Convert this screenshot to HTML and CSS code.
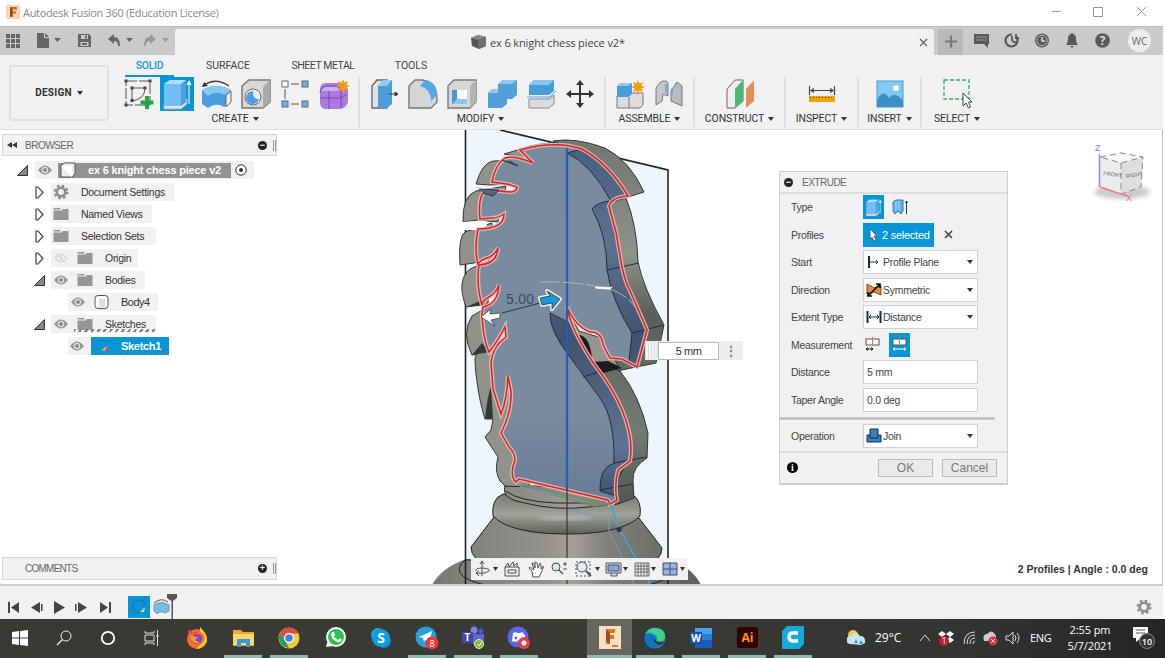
FILE: index.html
```html
<!DOCTYPE html>
<html lang="en">
<head>
<meta charset="utf-8">
<title>Autodesk Fusion 360</title>
<link rel="stylesheet" href="styles.css">
</head>
<body>
<svg class="defs" width="0" height="0">
  <symbol id="eye" viewBox="0 0 14 10"><path d="M0 5Q7-4 14 5Q7 14 0 5Z" fill="#999"/><circle cx="7" cy="5" r="3.1" fill="#eee"/><circle cx="7" cy="5" r="2" fill="#888"/></symbol>
  <symbol id="eyeoff" viewBox="0 0 14 10"><path d="M1 5Q7-2 13 5Q7 12 1 5ZM2 0L12 10" fill="none" stroke="#d8d8d8" stroke-width="1.3"/><circle cx="7" cy="5" r="1.8" fill="#d8d8d8"/></symbol>
  <symbol id="folder" viewBox="0 0 15 12"><path d="M0 0H7V1.5H0ZM0 2.5H8L9.5 1H15V12H0Z" fill="#969696"/></symbol>
  <symbol id="open" viewBox="0 0 11 11"><path d="M10.500 .5V10.500H.5Z" fill="#888" stroke="#333"/></symbol>
  <symbol id="closed" viewBox="0 0 9 13"><path d="M1 1H3L8 6.5L3 12H1Z" fill="#fff" stroke="#444" stroke-width="1.2"/></symbol>
  <symbol id="gear" viewBox="0 0 16 16"><circle cx="8" cy="8" r="6.2" fill="none" stroke="#8d8d8d" stroke-width="2.4" stroke-dasharray="2.5 2.37"/><circle cx="8" cy="8" r="4.200" fill="none" stroke="#8d8d8d" stroke-width="2.6"/></symbol>
  <symbol id="extrude" viewBox="0 0 34 34"><path d="M4 27V32H21L27 27V22Z" fill="#e4e4e4" stroke="#aaa"/><path d="M4 7L10 3H26V25L21 29H4Z" fill="#73bdf5"/><path d="M4 7L10 3H26L21 7Z" fill="#b3deff"/><path d="M21 7L26 3V25L21 29Z" fill="#4ba0e0"/><path d="M29 27V6M27 7.500L29 4L31 7.500Z" stroke="#fff" fill="#fff"/></symbol>
  <symbol id="spark" viewBox="0 0 14 14"><path d="M7 0L8.300 3.600L12 2L10.400 5.700L14 7L10.400 8.300L12 12L8.300 10.400L7 14L5.700 10.400L2 12L3.600 8.300L0 7L3.600 5.700L2 2L5.700 3.600Z" fill="#f39b0c"/></symbol>
</svg>

<header class="titlebar">
  <svg width="14" height="14" viewBox="0 0 14 14"><rect width="14" height="14" rx="1" fill="#f8d3b2"/><path d="M4 12V2H11V4.500H6.500V6.500H10V8.500H6.500V12Z" fill="#c96c1d"/><path d="M4 2L6.500 4.500V12L4 11Z" fill="#914515"/></svg>
  <span class="app-name">Autodesk Fusion 360 (Education License)</span>
  <svg class="win-buttons" width="96" height="12" viewBox="0 0 96 12" fill="none" stroke="#999"><path d="M1 5.500H10M42.500 1.500H51.500V10.500H42.500ZM86 1L95 10M95 1L86 10"/></svg>
</header>

<div class="tabbar">
  <svg class="quick" width="175" height="29" viewBox="0 26 175 29" fill="#666">
    <path d="M6 34h4v4h-4zM11 34h4v4h-4zM16 34h4v4h-4zM6 39h4v4h-4zM11 39h4v4h-4zM16 39h4v4h-4zM6 44h4v4h-4zM11 44h4v4h-4zM16 44h4v4h-4z"/>
    <path d="M37 33H44V38H49V48H37ZM45 33L49 37H45ZM54 38H61L57.500 42Z"/>
    <path d="M78 34H89L91 36V47H78Z"/><path d="M81 35H88V39H81ZM80.500 42H88.500V46H80.500Z" fill="#ccc"/><path d="M85 35.500H87V38.500H85ZM82 43H87V45H82Z"/>
    <path d="M108 39L114 34V37Q120 37 120 46H118Q118 41 114 41V44ZM126 38H133L129.500 42Z"/>
    <g fill="#999"><path d="M156 39L150 34V37Q144 37 144 46H146Q146 41 150 41V44ZM162 38H169L165.500 42Z"/></g>
  </svg>
  <div class="doc-tab">
    <svg width="16" height="14" viewBox="0 0 16 14"><path d="M0 3L7 0L15 2V11L8 14L1 11Z" fill="#555"/><path d="M0 3L7 0L15 2L7 5Z" fill="#888"/><path d="M7 5L15 2V11L8 14Z" fill="#707070"/></svg>
    <span>ex 6 knight chess piece v2*</span>
    <svg class="tab-close" width="9" height="9" viewBox="0 0 9 9"><path d="M1 1L8 8M8 1L1 8" stroke="#666" stroke-width="1.3"/></svg>
  </div>
  <svg class="status" width="231" height="29" viewBox="934 26 231 29" fill="#5a5a5a">
    <path d="M938 55V31Q938 29 940 29H961Q963 29 963 31V55Z" fill="#b9b9b9"/><path d="M945 41.500H957M951 35.500V47.500" stroke="#777" stroke-width="2.200"/>
    <path d="M974 34H989V44H988V48L984 44H974Z"/><path d="M976 37H987M976 40H987" stroke="#999"/>
    <circle cx="1011.500" cy="40.500" r="6" fill="none" stroke="#555" stroke-width="2.200" stroke-dasharray="28 5 5 0"/><path d="M1012 36V40Q1013 43 1016 42M1016 34V38H1019" stroke="#555" stroke-width="1.800" fill="none"/>
    <circle cx="1042" cy="40.500" r="7"/><circle cx="1042" cy="40.500" r="5.200" fill="none" stroke="#bbb"/><path d="M1042 37V41H1045" stroke="#ddd" stroke-width="1.500" fill="none"/>
    <path d="M1066 45Q1068 43 1068 38Q1068 35 1072 33Q1076 35 1076 38Q1076 43 1078 45ZM1070 46H1074L1072 48Z"/>
    <circle cx="1102.500" cy="40.500" r="7.300"/><text x="1102.500" y="45" class="help">?</text>
    <circle cx="1139.500" cy="40.500" r="11.500" fill="#ededed"/><text x="1139.500" y="44.500" class="user">WC</text>
  </svg>
</div>

<section class="ribbon">
  <div class="design">DESIGN <i class="caret"></i></div>
  <div class="ribbon-main">
    <nav class="tabs"><b class="on">SOLID</b><span class="t2">SURFACE</span><span class="t3">SHEET METAL</span><span class="t4">TOOLS</span></nav>
    <div class="groups">
      <div class="group g-create"><div class="icons">
        <svg width="34" height="34" viewBox="0 0 34 34"><path d="M5 4H29V28H5Z" fill="none" stroke="#555" stroke-width="1" stroke-dasharray="11 2"/><path d="M11 11H24Q24 22 11 24Z" fill="none" stroke="#555"/><path d="M3.500 2.500h3v3h-3zM27.500 2.500h3v3h-3zM3.500 26.500h3v3h-3zM9.500 9.500h3v3h-3zM22.500 9.500h3v3h-3zM9.500 22h3v3h-3z" fill="#444"/><path d="M26 19V32M19.500 25.500H32.500" stroke="#25a749" stroke-width="4"/></svg>
        <span class="selected"><svg width="34" height="34"><use href="#extrude"/></svg></span>
        <svg width="34" height="34" viewBox="0 0 34 34"><path d="M3 13Q17 5 32 13V25L25 30Q17 25 9 31L3 27Z" fill="#4a9ddd"/><path d="M3 13Q17 5 32 13L26 18Q17 13 9 19Z" fill="#87c7f6"/><path d="M27 18L32 14V25L27 30Z" fill="#eee" stroke="#666"/><path d="M30 9Q17 0 5 8" fill="none" stroke="#444" stroke-width="1.500"/><path d="M3 10L5 5L9 9Z" fill="#333"/></svg>
        <svg width="34" height="34" viewBox="0 0 34 34"><path d="M3 9L10 3H31V25L24 31H3Z" fill="#d8d8d8" stroke="#777" stroke-width="1.500"/><path d="M24 10L31 3V25L24 31Z" fill="#aaa"/><circle cx="14" cy="20" r="8" fill="#eee" stroke="#666"/><path d="M14 14A6.500 6.500 0 1 0 20 22Q14 23 14 14Z" fill="#4c9fe1"/></svg>
        <svg width="34" height="34" viewBox="0 0 34 34" fill="#69b0eb"><path d="M7 12V22M13 7H21M13 27H21" stroke="#555"/><g stroke="#666"><rect x="4" y="4" width="6" height="6" fill="#fff"/><rect x="24" y="4" width="6" height="6"/><rect x="4" y="24" width="6" height="6"/><rect x="24" y="24" width="6" height="6"/></g></svg>
        <svg width="34" height="34" viewBox="0 0 34 34"><path d="M3 12Q3 6 9 6H24Q31 7 31 14V25Q29 32 22 32H8Q3 31 3 25Z" fill="#ac7ade"/><path d="M3 16Q4 9 10 9H21L24 15V31M12 10V32M3 21H24L30 17" fill="none" stroke="#7749ad"/><path d="M5 13Q6 10 10 10H20L23 14H5Z" fill="#cfadf4"/><use href="#spark" x="19" y="2" width="14" height="14"/></svg>
      </div><div class="label">CREATE <i class="caret"></i></div></div>
      <div class="group g-modify"><div class="icons">
        <svg width="34" height="34" viewBox="0 0 34 34"><path d="M5 9L10 3H20V31H5Z" fill="#e2e2e2" stroke="#666" stroke-width="1.300"/><path d="M11 9L16 3H25V27L20 31H11Z" fill="#4c9edb"/><path d="M11 9L16 3H25L20 9Z" fill="#91cdf6"/><path d="M22 17H30M28 15L31 17L28 19Z" stroke="#333" fill="#333"/></svg>
        <svg width="34" height="34" viewBox="0 0 34 34"><path d="M3 9L9 3H16Q31 5 31 22V25L25 31H3Z" fill="#d6d6d6" stroke="#777" stroke-width="1.400"/><path d="M14 9L19 3Q31 5 31 18L25 24Q25 12 14 9Z" fill="#54a7e5"/></svg>
        <svg width="34" height="34" viewBox="0 0 34 34"><path d="M3 9L9 3H31V25L25 31H3Z" fill="#d7d7d7" stroke="#777" stroke-width="1.400"/><path d="M25 9L31 3V25L25 31Z" fill="#b4b4b4"/><path d="M7 13H22V27H7Z" fill="#fff"/><path d="M7 13H12V23H22V27H7Z" fill="#4399d6"/><path d="M7 27L12 22H22V27Z" fill="#8bc9f5"/></svg>
        <svg width="34" height="34" viewBox="0 0 34 34"><path d="M13 7L18 3H32V18L27 22H22V27L17 31H3V16L7 12H13Z" fill="#539fd8"/><path d="M13 7L18 3H32L27 7ZM3 16L7 12H13V16Z" fill="#8fc8f0"/></svg>
        <svg width="34" height="34" viewBox="0 0 34 34"><path d="M5 8L10 3H30V14L25 18H5Z" fill="#479cda"/><path d="M5 8L10 3H30L25 8Z" fill="#85c7f5"/><path d="M3 20H26L32 14" stroke="#55a5e1" fill="none"/><path d="M5 22H25L30 18V27L25 31H5Z" fill="#ddd" stroke="#888"/></svg>
        <svg width="34" height="34" viewBox="0 0 34 34"><path d="M17 6V28M6 17H28" stroke="#333" stroke-width="2"/><path d="M17 3L21 8H13ZM17 31L13 26H21ZM3 17L8 13V21ZM31 17L26 13V21Z" fill="#333"/></svg>
      </div><div class="label">MODIFY <i class="caret"></i></div></div>
      <div class="group g-assemble"><div class="icons">
        <svg width="34" height="34" viewBox="0 0 34 34"><path d="M4 19H16L19 16H30V28L27 31H4Z" fill="#ddd" stroke="#777"/><path d="M4 9L8 6H19V17L15 20H4Z" fill="#4e9cd7"/><path d="M4 9L8 6H19L15 9Z" fill="#90c9f4"/><path d="M16 20V31" stroke="#777"/><use href="#spark" x="18" y="3" width="14" height="14"/></svg>
        <svg width="34" height="34" viewBox="0 0 34 34"><path d="M4 12Q7 3 14 4L16 6V19L11 17L10 24L4 28Z" fill="#c7c7c7" stroke="#777"/><path d="M19 14L25 5L30 9V29L19 24Z" fill="#bbb" stroke="#777"/><path d="M14 7V16M20 11V17" stroke="#55a6e3" stroke-width="1.500"/></svg>
      </div><div class="label">ASSEMBLE <i class="caret"></i></div></div>
      <div class="group g-construct"><div class="icons"><svg width="34" height="34" viewBox="0 0 34 34"><path d="M4 12L12 3H20V24L12 31H4Z" fill="#eee" stroke="#666"/><path d="M12 12L20 3V24L12 31Z" fill="#48bb6a"/><path d="M23 12L31 3V24L23 31Z" fill="#e28f5b"/></svg></div><div class="label">CONSTRUCT <i class="caret"></i></div></div>
      <div class="group g-inspect"><div class="icons"><svg width="34" height="34" viewBox="0 0 34 34"><path d="M4.500 9V18M29.500 9V18M6 13.500H28M9 11.500L6 13.500L9 15.500M25 11.500L28 13.500L25 15.500" stroke="#444" stroke-width="1.200" fill="none"/><rect x="4" y="19" width="26" height="6" fill="#f0a30e"/><path d="M5 20.500H29" stroke="#6c4500" stroke-dasharray="1 2"/></svg></div><div class="label">INSPECT <i class="caret"></i></div></div>
      <div class="group g-insert"><div class="icons"><svg width="34" height="34" viewBox="0 0 34 34"><rect x="4" y="4" width="26" height="26" fill="#80c8f9" stroke="#4999d2"/><path d="M4 23Q10 11 16 21Q22 13 30 24V30H4Z" fill="#3b8fc8"/><circle cx="23" cy="11" r="3" fill="#fffbd5"/></svg></div><div class="label">INSERT <i class="caret"></i></div></div>
      <div class="group g-select"><div class="icons"><svg width="34" height="34" viewBox="0 0 34 34"><rect x="4" y="3" width="25" height="19" fill="none" stroke="#37ad61" stroke-width="1.300" stroke-dasharray="4 2"/><path d="M23 16V29L26 26L28.500 31L30.500 30L28.500 25H32Z" fill="#fff" stroke="#444"/></svg></div><div class="label">SELECT <i class="caret"></i></div></div>
    </div>
  </div>
</section>

<main class="canvas">
<svg class="model" width="1165" height="454" viewBox="0 130 1165 454">
  <defs>
    <linearGradient id="metal" x1="430" x2="700" gradientUnits="userSpaceOnUse"><stop offset="0" stop-color="#777874"/><stop offset=".2" stop-color="#85857f"/><stop offset=".42" stop-color="#93918a"/><stop offset=".53" stop-color="#a3a098"/><stop offset=".65" stop-color="#81807b"/><stop offset="1" stop-color="#5f605d"/></linearGradient>
    <linearGradient id="rim" x2="0" y2="1"><stop offset="0" stop-color="#777670"/><stop offset=".5" stop-color="#a3a199"/><stop offset="1" stop-color="#5f605b"/></linearGradient>
    <linearGradient id="side" y1="150" y2="500" x2="0" gradientUnits="userSpaceOnUse"><stop offset="0" stop-color="#747870"/><stop offset=".3" stop-color="#8e938b"/><stop offset=".47" stop-color="#5a5e57"/><stop offset=".8" stop-color="#747a74"/><stop offset="1" stop-color="#555955"/></linearGradient>
    <linearGradient id="blue" y1="140" y2="500" x2="0" gradientUnits="userSpaceOnUse"><stop offset="0" stop-color="#788b9d"/><stop offset=".75" stop-color="#7b8b9f"/><stop offset="1" stop-color="#687c97"/></linearGradient>
    <linearGradient id="deep" y1="140" y2="500" x2="0" gradientUnits="userSpaceOnUse"><stop offset="0" stop-color="#485f80"/><stop offset=".3" stop-color="#5d7190"/><stop offset=".55" stop-color="#3f526f"/><stop offset=".85" stop-color="#5f7494"/><stop offset="1" stop-color="#3d5271"/></linearGradient>
    <filter id="soft"><feGaussianBlur stdDeviation="2"/></filter>
    <path id="face" d="M520 150Q555 140 582 149Q609 164 628 196Q612 197 609 206L616 232L622 267Q625 282 631 293L647 330L637 367L622 359L610 358L604 347L602 340Q599 331 590 332Q575 326 567 307Q570 328 594 364Q613 388 622 410Q634 438 630 461L618 470Q614 486 617 500L610 504L608 500L519 479L516 482Q509 476 515 460Q515 453 509 447L501 433Q512 412 511 391L508 376Q507 400 501 414L493 389L491 362Q493 346 506 337L505 327Q498 341 489 352Q483 339 482 315L483 307Q498 304 499 285Q496 293 489 297Q483 300 482 305Q476 284 479 265Q497 264 498 248Q494 256 487 258Q482 259 478 264Q474 248 478 229Q504 229 504 214Q498 218 492 218L480 219Q477 190 490 190L509 192Q517 192 517 187L507 184L492 182Q495 165 505 158Q514 155 533 163Z"/>
  </defs>
  <path d="M465.500 130H500L668 170V584H465.500Z" fill="#edf6fc"/>
  <g stroke="#222" fill="url(#metal)">
    <path d="M432 585Q441 568 466 559H669Q692 567 701 585Z" stroke="none"/>
    <path d="M465 560Q454 569 464 577Q483 590 567 594Q651 590 668 577V560Z"/>
    <path d="M494 517L471 547Q470 575 567 576Q663 575 662 548L639 518Z"/>
    <path d="M503 494Q491 499 493 516Q510 534 567 534Q623 534 640 516Q642 501 633 495Z" fill="url(#rim)"/>
    <path d="M505 486Q501 499 525 503Q555 511 589 507Q610 506 617 500V486Z"/>
    <path d="M506 491Q518 501 555 503L590 503" fill="none"/>
  </g>
  <ellipse cx="565" cy="518" rx="28" ry="2" fill="#d9d7d0" opacity=".6" filter="url(#soft)"/>
  <path d="M465.500 130V584M500 130L668 170V584" fill="none" stroke="#222" stroke-width="1.600"/>
  <g stroke="#252b2d" stroke-width=".9" fill="#90928b">
    <path d="M504 154L521 149Q530 145 550 143L540 165L515 156Z"/>
    <path d="M476 184Q482 163 493 161L518 160L509 184L490 185Z"/>
    <path d="M463 222Q462 196 476 191L506 186L498 222L478 220Z"/>
    <path d="M460 265Q458 237 465 232L492 223V258L474 263Z"/>
    <path d="M466 307Q456 280 470 269L490 260L488 304Z"/>
    <path d="M472 355Q461 333 472 316L491 305L490 353Z"/>
    <path d="M475 359Q475 370 477 382Q480 404 485 419H493L491 430L485 437L498 457Q494 471 500 481L505 486L530 487L520 442L504 357L489 347Q475 352 475 359Z"/>
    <path d="M553 141Q575 137 605 148Q630 161 644 192L628 197L609 206L590 155Z" fill="url(#side)"/>
    <path d="M611 202L626 198Q637 225 638 262Q643 287 664 325L656 363L607 373L593 356L625 339L607 269Z" fill="url(#side)"/>
    <path d="M567 310L579 331L605 339L618 366L595 374L575 335Z" fill="#96958e"/>
    <path d="M590 360L620 371Q640 396 648 433L647 458Q632 467 633 481L634 498L615 505L614 465L630 440Z" fill="url(#side)"/>
  </g>
  <path d="M491 386L493 419H485Q487 398 491 386ZM482 343L490 352L472 355ZM482 290L483 305L466 307L480 301Z" fill="#353936"/>
  <path d="M462 222Q474 221 486 221L487 226L476 230L464 230Z" fill="#fff"/>
  <use href="#face" fill="url(#blue)"/>
  <g fill="url(#deep)" stroke="#222d3a" stroke-width="1">
    <path d="M567 153Q591 164 611 201L627 196Q610 164 582 149Z"/>
    <path d="M592 209Q597 202 611 201L609 207L622 267L647 330L637 367L629 362L632 333Q612 301 607 270Q607 235 592 209Z"/>
    <path d="M550 313Q549 330 570 357L600 398Q615 419 614 463Q599 468 600 491L616 496Q615 476 630 461Q634 438 622 410Q613 389 594 364L568 322Q554 315 550 313Z"/>
    <path d="M607 270L639 263M632 333L664 325M583 377L605 370M614 463L647 457M600 490L633 484" fill="none"/>
  </g>
  <path d="M579 335Q590 336 592 359L583 347ZM594 362L608 361L622 368L603 373Z" fill="#171d1d"/>
  <use href="#face" class="face-glow"/><use href="#face" class="face-line"/>
  <path d="M522 483L612 504L595 507L520 487Z" fill="#81856e" opacity=".9"/>
  <path d="M520 487L592 503M568 509L609 519V532L624 560L634 584" fill="none" stroke="#62a4c7"/><path d="M610 504L620 530L650 584" fill="none" stroke="#33aae0" stroke-width="1.600"/><circle cx="619" cy="529.500" r="2.500" fill="#334"/>
  <path d="M567 148V490" stroke="#245eba" stroke-width="2.300"/><path d="M567 490V584" stroke="#222"/>
  <path d="M479 189L499 190L493 196L483 193M502 160L518 166L509 161" fill="#52698a" stroke="#222" stroke-width=".8"/>
  <path d="M540 282Q576 281 610 289Q627 295 635 307" fill="none" stroke="#adb5bb" stroke-dasharray="20 3"/><path d="M594 286L613 287L610 290L596 289Z" fill="#fff" stroke="#777" stroke-width=".5"/>
  <path d="M502 313L540 303" stroke="#2a3039"/><text x="506" y="304" class="dimension">5.00</text>
  <path id="arrow" d="M540 298L550 296L547 291L560 299L552 309L552 303L542 305Z" fill="#128fc9" stroke="#eee" stroke-width="4" stroke-linejoin="round"/><path d="M540 298L550 296L547 291L560 299L552 309L552 303L542 305Z" fill="#159bd6" stroke="#334" stroke-width=".8"/>
  <path d="M481 317L491 309L490 314L500 313V318L491 320L495 326Z" fill="#fff" stroke="#333" stroke-width=".7"/>
  <ellipse cx="1122" cy="192" rx="28" ry="7" fill="#999" opacity=".5" filter="url(#soft)"/>
  <path d="M1100 157L1121 153L1143 157L1141 187L1121 194L1100 187Z" fill="#ececec"/><path d="M1100 157L1121 153L1143 157L1121 163Z" fill="#f7f7f7"/><path d="M1121 163L1143 157L1141 187L1121 194Z" fill="#dedede"/>
  <path d="M1100 157L1121 153L1143 157L1121 163ZM1121 163V194L1141 187L1143 157" fill="none" stroke="#888" stroke-dasharray="6 4"/><path d="M1099.500 154V187" stroke="#8689ff" stroke-width="1.500"/><path d="M1100 187L1127 196" stroke="#f17c7c" stroke-width="1.500"/>
  <text x="1103" y="175" class="cube" transform="rotate(7 1102 176)">FRONT</text><text x="1126" y="178" class="cube" transform="rotate(-8 1126 178)">RIGHT</text><text x="1095" y="151" class="axis z">Z</text><text x="1126" y="201" class="axis x">X</text>
</svg>

<aside class="browser">
  <div class="panel-head"><svg width="11" height="8" viewBox="0 0 11 8"><path d="M5 1V7L0 4ZM10 1V7L5 4Z" fill="#333"/></svg><span>BROWSER</span><b class="round">−</b><i class="handle"></i></div>
  <div class="tree">
    <div class="row r-root"><svg width="11" height="11"><use href="#open"/></svg><div class="chip"><svg width="14" height="10"><use href="#eye"/></svg><strong class="root-name"><svg width="16" height="16" viewBox="0 0 16 16"><path d="M1 4L4 1H15V12L12 15H1Z" fill="#e9eef3" stroke="#555"/><path d="M1 4H12V15" fill="#fff"/></svg><span>ex 6 knight chess piece v2</span></strong><svg width="12" height="12" viewBox="0 0 12 12"><circle cx="6" cy="6" r="5.200" fill="#fff" stroke="#333"/><circle cx="6" cy="6" r="2" fill="#333"/></svg></div></div>
    <div class="row lv1"><svg width="9" height="13"><use href="#closed"/></svg><div class="chip w123"><svg width="16" height="16"><use href="#gear"/></svg><span>Document Settings</span></div></div>
    <div class="row lv1"><svg width="9" height="13"><use href="#closed"/></svg><div class="chip w101"><svg width="16" height="12"><use href="#folder"/></svg><span>Named Views</span></div></div>
    <div class="row lv1"><svg width="9" height="13"><use href="#closed"/></svg><div class="chip w105"><svg width="16" height="12"><use href="#folder"/></svg><span>Selection Sets</span></div></div>
    <div class="row lv1"><svg width="9" height="13"><use href="#closed"/></svg><div class="chip w87"><svg class="seye" width="14" height="10"><use href="#eyeoff"/></svg><svg width="16" height="12"><use href="#folder"/></svg><span>Origin</span></div></div>
    <div class="row lv1 opened"><svg width="11" height="11"><use href="#open"/></svg><div class="chip w94"><svg class="seye" width="14" height="10"><use href="#eye"/></svg><svg width="16" height="12"><use href="#folder"/></svg><span>Bodies</span></div></div>
    <div class="row lv2"><div class="chip w90"><svg class="seye" width="14" height="10"><use href="#eye"/></svg><svg width="16" height="16" viewBox="0 0 16 16"><rect x="1" y="1.500" width="13" height="13" rx="3" fill="#fff" stroke="#555"/><path d="M5 5H11V13H5Z" fill="#ddd"/></svg><span>Body4</span></div></div>
    <div class="row lv1 opened"><svg width="11" height="11"><use href="#open"/></svg><div class="chip w105 sketches"><svg class="seye" width="14" height="10"><use href="#eye"/></svg><svg width="16" height="12"><use href="#folder"/></svg><span>Sketches</span></div></div>
    <div class="row lv2"><div class="chip w23"><svg width="14" height="10"><use href="#eye"/></svg></div><strong class="sketch-name"><svg width="16" height="14" viewBox="0 0 16 14"><path d="M2 4Q3 1 12 2M2 4V11" stroke="#177bb2" fill="none"/><path d="M8 11L13 7L11 12Z" fill="#f2cc68"/><path d="M11 12L14 9" stroke="#de522e" stroke-width="2"/></svg><span>Sketch1</span></strong></div>
  </div>
</aside>

<section class="dialog">
  <div class="dialog-head"><b class="round">−</b><span>EXTRUDE</span></div>
  <div class="form">
    <div class="field"><label>Type</label><b class="square"><svg width="19" height="19"><use href="#extrude"/></svg></b><svg class="alt" width="18" height="18" viewBox="0 0 18 18"><path d="M2 4L5 2H12V13L10 16L7 13L4 16L2 13Z" fill="#62b2ec" stroke="#3377aa"/><path d="M5 3V12M8 3V12" stroke="#a8dafa"/><path d="M15.500 16V3M14.500 4.500L15.500 3L16.500 4.500Z" stroke="#333" fill="#333"/></svg></div>
    <div class="field"><label>Profiles</label><b class="picked"><svg width="9" height="14" viewBox="0 0 9 14"><path d="M1 1V11L3 9L5 13L7 12L5 8H8Z" fill="#fff" stroke="#555" stroke-width=".8"/></svg>2 selected</b><svg class="clear" width="9" height="9" viewBox="0 0 9 9"><path d="M1 1L8 8M8 1L1 8" stroke="#444" stroke-width="1.600"/></svg></div>
    <div class="field"><label>Start</label><div class="input"><svg width="16" height="16" viewBox="0 0 16 16"><path d="M3 2V14" stroke="#132b58" stroke-width="2"/><path d="M4 8H12M10 6L12 8L10 10" stroke="#333" fill="none"/></svg><span>Profile Plane</span><i class="caret"></i></div></div>
    <div class="field"><label>Direction</label><div class="input"><svg width="16" height="16" viewBox="0 0 16 16"><path d="M1 2L8 6L15 4V13L8 10L1 12Z" fill="#e98948" stroke="#874314"/><path d="M2 14L14 2M10 2H14V6M2 10V14H6" stroke="#111" stroke-width="1.700" fill="none"/></svg><span>Symmetric</span><i class="caret"></i></div></div>
    <div class="field"><label>Extent Type</label><div class="input"><svg width="16" height="16" viewBox="0 0 16 16"><path d="M1.500 2V14M14.500 2V14" stroke="#132b58" stroke-width="2"/><path d="M3 8H13M5 6L3 8L5 10M11 6L13 8L11 10" stroke="#222" fill="none"/></svg><span>Distance</span><i class="caret"></i></div></div>
    <div class="field"><label>Measurement</label><svg class="measure" width="16" height="15" viewBox="0 0 16 15"><rect x="1" y="2" width="13" height="6" fill="#fff" stroke="#555"/><path d="M7.500 0V9" stroke="#e47432"/><path d="M1 12H8M3 10.500L1 12L3 13.500M6 10.500L8 12L6 13.500" stroke="#111" fill="none"/></svg><b class="square m"><svg width="16" height="15" viewBox="0 0 16 15"><rect x="1" y="2" width="13" height="6" fill="#fff" stroke="#456"/><path d="M7.500 0V9" stroke="#e47432"/><path d="M1 12H14M3 10.500L1 12L3 13.500M12 10.500L14 12L12 13.500" stroke="#fff" fill="none"/></svg></b></div>
    <div class="field"><label>Distance</label><div class="input plain">5 mm</div></div>
    <div class="field"><label>Taper Angle</label><div class="input plain">0.0 deg</div></div>
    <hr>
    <div class="field"><label>Operation</label><div class="input"><svg width="16" height="16" viewBox="0 0 16 16"><path d="M1 7H4V1H12V7H15V14H1Z" fill="#377fbc" stroke="#162d4c"/><path d="M4 7V10H12V7" fill="none" stroke="#162d4c"/></svg><span>Join</span><i class="caret"></i></div></div>
  </div>
  <footer><b class="info">i</b><button class="ok">OK</button><button class="cancel">Cancel</button></footer>
</section>

<div class="mini"><i></i><span>5 mm</span><b>⋮</b></div>
<div class="navbar"><svg width="217" height="22" viewBox="471 558 217 22" fill="none" stroke="#4b4f58">
  <path d="M482 562V576M476 571Q475 568 483 568Q491 569 489 571Q485 574 476 573M479 571L476 573L479 576M480 564L482 561L484 564"/><path d="M505 567H519V576H505ZM508 570H516V573H508ZM505 567L508 563L509 567L513 562L514 566L517 563V567"/>
  <path d="M532 571L529 568Q529 566 534 570L532 563Q534 562 535 568L535 562Q537 561 538 568L540 563Q541 563 541 569L543 566Q544 567 541 573L539 577H533Z" fill="#fff"/>
  <circle cx="556" cy="567" r="4" fill="#d9e7ee"/><path d="M559 570L563 574" stroke-width="1.500"/><path d="M563 564H567M565 562V566M563 569H567"/>
  <path d="M576 562H590V576H576Z" stroke-dasharray="2 2"/><circle cx="582" cy="567" r="5" fill="#dfebef"/><path d="M586 571L591 576" stroke-width="2"/>
  <path d="M606 563H621V573H606ZM611 573V576H617V573" fill="#dfe3e8"/><path d="M608 565H619V571H608Z" fill="#82a7df"/>
  <path d="M635 563H649V576H635ZM638 563V576M641 563V576M644 563V576M647 563V576M635 566H649M635 569H649M635 572H649" stroke-width=".8"/><path d="M663 563H677V575H663ZM670 563V575M663 569H677" fill="#94b3e7"/>
  <path d="M493 567h5l-2.500 4zM595 567h5l-2.500 4zM623 567h5l-2.500 4zM651 567h5l-2.500 4zM680 567h5l-2.500 4z" fill="#333" stroke="none"/>
</svg></div>
<div class="comments"><span>COMMENTS</span><b class="round">+</b><i class="handle"></i></div>
<div class="angle">2 Profiles | Angle : 0.0 deg</div>
</main>

<section class="timeline">
  <svg width="180" height="33" viewBox="0 586 180 33" fill="#444"><path d="M8 602h2v11h-2zM19 602v11l-8-5.500zM40 602v11l-9-5.500zM41 604h1.500v7h-1.500zM54 601v13l11-6.500zM75 604h1.500v7h-1.500zM78 602v11l9-5.500zM100 602v11l8-5.500zM109 602h2v11h-2z"/><rect x="128" y="596" width="22" height="22" fill="#0696d7"/><path d="M133 611V603Q134 600 144 601V607M133 611L140 613" fill="none" stroke="#286d98"/><path d="M140 612L145 607L144 612Z" fill="#f4ce73"/><path d="M154 605Q161 600 169 605V611L165 613Q161 610 157 614L154 611Z" fill="#78bbe8" stroke="#7790a0"/><path d="M154 603Q161 597 168 602" fill="none" stroke="#555"/><path d="M167 594H177V598L173 601V619H171.500V601L167 598Z" fill="#555"/></svg>
  <svg class="settings" width="16" height="16"><use href="#gear"/></svg>
</section>

<footer class="taskbar">
  <div class="tk s"><svg width="16" height="16" viewBox="0 0 16 16"><path d="M0 2L7 1V7.500H0ZM8 1L16 0V7.500H8ZM0 8.500H7V15L0 14ZM8 8.500H16V16L8 15Z" fill="#fff"/></svg></div>
  <div class="tk s"><svg width="16" height="16" viewBox="0 0 16 16"><circle cx="10" cy="6" r="5" fill="none" stroke="#eee"/><path d="M6.500 9.500L1 15" stroke="#eee" stroke-width="1.200"/></svg></div>
  <div class="tk s"><svg width="16" height="16"><circle cx="8" cy="8" r="6.200" fill="none" stroke="#fff" stroke-width="1.800"/></svg></div>
  <div class="tk s"><svg width="16" height="16" viewBox="0 0 16 16"><path d="M1 1V3H10V1M1 15V13H10V15M1 5H10V11H1ZM13.500 0V16M12 6H15" fill="none" stroke="#ddd"/></svg></div>
  <div class="tk"><svg width="22" height="22" viewBox="0 0 22 22"><circle cx="11" cy="12" r="10" fill="#ff6b2c"/><path d="M14 0Q22 8 21 14Q18 22 10 22L18 14Q20 8 14 5Z" fill="#ffca24"/><path d="M2 6L3 2L7 6L12 5L9 8Z" fill="#ff3d55"/><circle cx="11" cy="12" r="5" fill="#7b45c8"/><path d="M4 9L12 10L9 13L14 16Q7 18 4 9" fill="#ff9e2a"/></svg></div>
  <div class="tk run"><svg width="21" height="20" viewBox="0 0 21 20"><path d="M0 2H8L10 4H21V18H0Z" fill="#eba927"/><path d="M0 6H21V17H0Z" fill="#ffd76b"/><path d="M4 11H17V19H13V15H8V19H4Z" fill="#379bd7"/></svg></div>
  <div class="tk run"><svg width="22" height="22" viewBox="0 0 22 22"><circle cx="11" cy="11" r="10.500" fill="#f4ca3d"/><path d="M2 6A10.500 10.500 0 0 1 20.500 6.500H11L7 13Z" fill="#dc4b3e"/><path d="M2 6L8 15L11 21A10.500 10.500 0 0 1 2 6" fill="#239d59"/><circle cx="11" cy="11" r="5" fill="#fff"/><circle cx="11" cy="11" r="3.800" fill="#3c82e8"/></svg></div>
  <div class="tk"><svg width="21" height="21" viewBox="0 0 21 21"><circle cx="11" cy="10" r="10" fill="#fff"/><path d="M1 20L3 13L8 19Z" fill="#fff"/><circle cx="11" cy="10" r="8" fill="#2ac24d"/><path d="M7 5L9 5L10 8L9 10L13 13L15 11L17 13Q15 16 12 15Q6 12 6 7Z" fill="#fff"/></svg></div>
  <div class="tk"><svg width="22" height="22" viewBox="0 0 22 22"><circle cx="8" cy="8" r="7" fill="#18a9e9"/><circle cx="14" cy="14" r="7" fill="#078bd4"/><circle cx="11" cy="11" r="9" fill="#0a9fe4"/><text x="11" y="16" class="logo">S</text></svg></div>
  <div class="tk run"><svg width="24" height="24" viewBox="0 0 24 24"><circle cx="11" cy="11" r="10.500" fill="#289fd8"/><path d="M4 11L17 5L14 17L10 14L9 16L8 12Z" fill="#fff"/><circle cx="17" cy="17" r="6.500" fill="#e93835"/><text x="17" y="20.500" class="badge">8</text></svg></div>
  <div class="tk run"><svg width="24" height="23" viewBox="0 0 24 23"><circle cx="13" cy="4" r="3.500" fill="#7b83eb"/><circle cx="20" cy="5" r="2.500" fill="#5059c9"/><path d="M8 8H23V15Q20 20 13 18Q8 17 8 8" fill="#6067cb"/><path d="M1 6H12V17H1Z" fill="#4149a7"/><text x="6.500" y="15" class="teams">T</text><circle cx="18" cy="18" r="4.500" fill="#85bd22" stroke="#eee"/><path d="M16 18L18 20L21 16" fill="none" stroke="#fff"/></svg></div>
  <div class="tk run"><svg width="24" height="24" viewBox="0 0 24 24"><circle cx="11" cy="11" r="10.500" fill="#5967ed"/><path d="M6 7L9 6L10 7H13L15 6L18 9V15L14 16L12 14L9 16L5 15Z" fill="#fff"/><circle cx="9" cy="12" r="1.400" fill="#5967ed"/><circle cx="17" cy="17" r="6" fill="#e93f43"/><circle cx="17" cy="17" r="2.500" fill="#fff"/></svg></div>
  <div class="tk run active"><svg width="22" height="23" viewBox="0 0 22 23"><path d="M0 0H22V23H0Z" fill="#fadfc4"/><path d="M7 18V3H16V7H11V9H15V13H11V18Z" fill="#d47b28"/><path d="M7 3L11 7V18L7 15Z" fill="#9b511d"/><path d="M13 20H19" stroke="#d47b28" stroke-width="2"/></svg></div>
  <div class="tk run"><svg width="22" height="22" viewBox="0 0 22 22"><circle cx="11" cy="11" r="10.500" fill="#128bd2"/><path d="M1 7Q5 0 12 1Q22 2 21 11Q19 16 12 14Q15 10 11 8Q5 4 1 7Z" fill="#42cf92"/><path d="M1 8Q7 5 10 9Q6 18 16 19Q4 25 1 14Z" fill="#0b75c2"/><path d="M11 9Q9 16 21 15Q18 19 14 18Q7 15 11 9Z" fill="#383934"/></svg></div>
  <div class="tk run"><svg width="22" height="22" viewBox="0 0 22 22"><path d="M5 1H22V21H5Z" fill="#195bb9"/><path d="M5 1H22V7H5Z" fill="#45a5eb"/><path d="M5 7H22V13H5Z" fill="#2b7dd3"/><path d="M0 5H12V17H0Z" fill="#1850a9"/><text x="6" y="14.500" class="word">W</text></svg></div>
  <div class="tk run"><svg width="21" height="21"><rect width="21" height="21" rx="3" fill="#300"/><text x="10.500" y="15" class="ai">Ai</text></svg></div>
  <div class="tk run"><svg width="22" height="23" viewBox="0 0 22 23"><path d="M5 0H22V18L17 23H0V5Z" fill="#15a9dc"/><path d="M16 7H11Q7 7 7 11Q7 15 11 15H16" stroke="#fff" stroke-width="3.400" fill="none"/></svg></div>
  <div class="tray"><svg width="19" height="18" viewBox="0 0 19 18"><circle cx="6" cy="6" r="5" fill="#f7c74f"/><path d="M3 15A4 4 0 0 1 4 7Q9 1 13 7Q19 7 18 14L14 16Z" fill="#c7e5fa"/><path d="M9 10L7 14H11ZM14 11L12 15H16Z" fill="#4393d1"/></svg><span class="temp">29°C</span>
    <svg class="tray-icons" width="105" height="22" viewBox="918 627 105 22" fill="none" stroke="#ddd"><path d="M920 641L925 635L930 641"/><path d="M942 631L946 634L942 637L938 634ZM950 631L954 634L950 637L946 634ZM950 637L954 640L950 643L946 640Z" fill="#fff" stroke="none"/><circle cx="944" cy="641" r="5" fill="#c51d29" stroke="none"/><text x="944" y="644" class="tiny">1</text><path d="M964 644Q964 632 975 632M967 644Q967 635 975 635M970 644Q970 638 975 638M973 644Q973 641 975 641"/><path d="M984 641Q982 634 987 634Q992 628 996 636V641Z" fill="#ccc" stroke="none"/><circle cx="993" cy="641" r="4.500" fill="#d9303c" stroke="none"/><path d="M991 639L995 643M995 639L991 643"/><path d="M1006 636H1009L1013 632V644L1009 640H1006ZM1015 635Q1017 638 1015 641M1017 633Q1021 638 1017 643"/></svg>
    <span class="lang">ENG</span><div class="clock"><span>2:55 pm</span><span>5/7/2021</span></div>
    <svg class="notice" width="24" height="24" viewBox="0 0 24 24"><path d="M1 1H16V12H9L4 16V12H1Z" fill="#fff"/><path d="M4 4H13M4 7H13" stroke="#555"/><circle cx="15" cy="15" r="7.500" fill="#343434" stroke="#888"/><text x="15" y="19" class="ten">10</text></svg>
  </div>
</footer>
</body>
</html>
```
FILE: styles.css
```css
* { box-sizing: border-box; }
body { margin: 0; width: 1165px; height: 658px; overflow: hidden; background: #fff; color: #444; font: 11px "Liberation Sans", sans-serif; }
svg { flex: none; display: block; }
.defs { position: absolute; }
.titlebar { height: 26px; display: flex; align-items: center; padding: 0 18px 2px 6px; gap: 3px; }
.app-name { color: #888; font: 11px "Open Sans", sans-serif; letter-spacing: -.32px; white-space: nowrap; }
.win-buttons { margin-left: auto; }
.tabbar { height: 29px; display: flex; background: #cacaca; border-top: 1px solid #bbb; width: 1163px; }
.quick, .status { margin-top: -1px; }
.doc-tab { flex: none; width: 759px; margin-top: 2px; background: #f1f1f1; border-radius: 3px 3px 0 0; display: flex; align-items: center; padding-left: 296px; gap: 3px; color: #444; font: 11px "Open Sans", sans-serif; letter-spacing: -.12px; }
.tab-close { margin: 0 6px 0 auto; }
.help, .user, .logo, .badge, .teams, .word, .ai, .tiny, .ten { text-anchor: middle; stroke: none; font-family: "Open Sans", sans-serif; }
.help { font-size: 12px; font-weight: 700; fill: #ddd; }
.user { font-size: 10px; fill: #666; }
.ribbon { height: 75px; width: 1163px; background: #f1f1f1; border-bottom: 1px solid #ddd; display: flex; padding-left: 9px; }
.design { flex: none; width: 100px; height: 56px; margin-top: 10px; border: 2px solid #e0e0e0; border-radius: 4px; display: flex; align-items: center; justify-content: center; gap: 5px; font: 700 10px Roboto, sans-serif; letter-spacing: .25px; color: #333; padding-bottom: 1px; }
.caret { display: inline-block; border: solid transparent; border-width: 4px 3px 0; border-top-color: #333; }
.ribbon-main { margin-left: 8px; }
.tabs { display: flex; height: 22px; padding-left: 8px; font: 10.5px/21px Roboto, sans-serif; white-space: nowrap; text-align: center; }
.tabs .on { width: 49px; color: #1698d5; font-weight: 500; letter-spacing: -.3px; border-bottom: 2px solid #0696d7; }
.t2 { width: 80px; margin-left: 14px; }.t3 { width: 90px; margin-left: 10px; letter-spacing: -.45px; }.t4 { width: 60px; margin-left: 13px; }
.groups { display: flex; }
.group { height: 50px; display: flex; flex-direction: column; align-items: center; border-right: 2px solid #dedede; }
.icons { height: 34px; display: flex; align-items: center; gap: 5.300px; }
.selected { background: #0696d7; }
.label { display: flex; align-items: center; gap: 4px; white-space: nowrap; font: 10.500px/16px Roboto, sans-serif; letter-spacing: -.1px; color: #333; }
.g-create { width: 243px; padding-right: 3px; }.g-create .label { margin-right: 2px; }.g-modify { width: 246px; }.g-modify .label { margin-right: 3px; }.g-assemble { width: 89px; }.g-construct { width: 91px; }.g-inspect { width: 73px; }.g-insert { width: 63px; }.g-select { width: 70px; border: 0; }
.canvas { height: 454px; position: relative; width: 1163px; border-right: 1px solid #bbb; }
.model, .browser, .dialog, .mini, .navbar, .comments, .angle { position: absolute; }
.model { left: 0; top: 0; }
.face-glow { fill: none; stroke: #dfc4bd; stroke-width: 4.200; stroke-opacity: .85; }
.face-line { fill: none; stroke: #e51c22; stroke-width: 1.500; }
.dimension { font-size: 14px; fill: #3d4b59; letter-spacing: .3px; }
.cube { font: 5.500px "Liberation Sans", sans-serif; fill: #666; }.axis { font: 9px "Liberation Sans", sans-serif; }.z { fill: #777cff; }.x { fill: #f66; }
.browser { left: 2px; top: 4px; width: 275px; }
.panel-head, .comments { height: 22px; border: 1px solid #d4d4d4; background: #f1f1f1; display: flex; align-items: center; color: #666; font-size: 10px; letter-spacing: -.5px; }
.panel-head { padding-left: 4px; gap: 7px; }
.comments span { letter-spacing: -.75px; }
.round { width: 9px; height: 9px; border-radius: 50%; background: #222; color: #fff; display: flex; align-items: center; justify-content: center; font-size: 9px; line-height: 9px; letter-spacing: 0; flex: none; }
.panel-head .round, .comments .round { margin-left: auto; }
.handle { width: 3px; height: 11px; border: solid #999; border-width: 0 1px; }
.panel-head .handle { margin-left: -1px; }
.tree { padding-top: 3px; }
.row { height: 22px; display: flex; align-items: center; }
.chip { height: 18px; background: #f1f1f1; display: flex; align-items: center; white-space: nowrap; color: #333; }
.r-root { padding-left: 15px; gap: 7px; }
.r-root .chip { width: 219px; padding-left: 3px; }
.root-name { height: 15px; width: 173px; margin: 0 4px 0 6px; background: #929292; color: #fff; display: flex; align-items: center; gap: 12px; padding-left: 2px; letter-spacing: -.2px; }
.lv1 { padding-left: 33px; gap: 7px; }.lv1.opened { padding-left: 32px; gap: 6px; }
.lv1 .chip { padding-left: 2px; }.lv1 .chip > span { margin-left: 12px; font-size: 10.500px; letter-spacing: -.28px; }
.seye { margin: 0 9px 0 1px; }
.lv2 { padding-left: 66px; }.lv2 .chip { padding-left: 2px; }.lv2 .chip > span { margin-left: 11px; letter-spacing: -.5px; }
.w123 { width: 123px; }.w101 { width: 101px; }.w105 { width: 105px; }.w87 { width: 87px; }.w94 { width: 94px; }.w90 { width: 90px; }.w23 { width: 23px; }
.sketches::after, .sketch-name::after { content: ""; position: absolute; left: 72px; width: 82px; height: 3px; margin-top: 12px; background: repeating-linear-gradient(125deg, #777f92 0 2px, transparent 2px 5px); }
.sketch-name { width: 78px; height: 18px; display: flex; align-items: center; background: #0696d7; color: #fff; gap: 11px; padding-left: 3px; letter-spacing: -.3px; }
.sketch-name::after { left: 91px; width: 75px; opacity: .5; }
.dialog { left: 779px; top: 41px; width: 229px; height: 314px; border: 1px solid #ccc; border-bottom-width: 2px; background: #f1f1f1; }
.dialog-head { height: 22px; display: flex; align-items: center; gap: 9px; padding-left: 4px; border-bottom: 2px solid #ddd; color: #666; font-size: 10px; letter-spacing: -.5px; }
.form { margin-top: -.7px; padding: 0 29px 0 11px; }
.field { height: 27.500px; display: flex; align-items: center; }
.field label { width: 72px; white-space: nowrap; font-size: 10.500px; letter-spacing: -.28px; }
.square { width: 21px; height: 24px; background: #0696d7; display: flex; align-items: center; justify-content: center; }
.alt { margin-left: 7px; }
.picked { height: 24px; width: 71px; background: #0696d7; color: #fff; font-weight: 400; display: flex; align-items: center; gap: 4px; padding-left: 6px; white-space: nowrap; letter-spacing: -.25px; }
.clear { margin-left: 10px; }
.input { width: 115px; height: 24px; background: #fff; border: 1px solid #d0d0d0; display: flex; align-items: center; padding: 0 4px 0 2px; gap: 1px; font-size: 10.500px; letter-spacing: -.28px; white-space: nowrap; }
.input .caret { margin-left: auto; }.plain { padding-left: 3px; }
.measure { margin-left: 2px; }.m { margin-left: 8px; }
hr { height: 3px; margin: 4px -17px 2px -11px; border: 0; background: #c4c4c4; }
.dialog footer { height: 34px; border-top: 2px solid #ddd; display: flex; align-items: center; padding: 0 10px 2px 7px; margin-top: 1px; }
.info { width: 11px; height: 11px; border-radius: 50%; background: #000; color: #fff; font: 700 10px/11px "Liberation Serif", serif; text-align: center; }
button { height: 18px; padding: 0; border: 1px solid #bbb; background: #eaeaea; font: 12px "Liberation Sans", sans-serif; color: #777; width: 55px; }
.ok { margin-left: auto; }.cancel { margin-left: 9px; }
.mini { left: 645px; top: 211px; height: 19px; width: 98px; background: #eee; display: flex; align-items: center; }
.mini i { width: 13px; height: 17px; background: repeating-linear-gradient(90deg, #ddd 0 1px, #f2f2f2 1px 3px); }
.mini span { width: 63px; height: 18px; border: 1px solid #bbb; background: #fff; line-height: 16px; text-align: center; color: #333; letter-spacing: -.4px; }.mini b { width: 24px; text-align: center; font-size: 14px; color: #888; }
.navbar { left: 471px; top: 428px; background: #f1f1f1; }
.comments { left: 2px; top: 427px; width: 275px; height: 23px; padding-left: 22px; }.comments .handle { margin-left: 6px; }
.angle { right: 14px; top: 433px; font-weight: 700; font-size: 10.500px; color: #333; }
.timeline { height: 35px; width: 1163px; background: #f1f1f1; border-top: 2px solid #ccc; display: flex; }
.settings { margin: 13px 11px 0 auto; }
.taskbar { height: 39px; background: linear-gradient(90deg, #383934, #3b3b34 50%, #333 83%, #252526); display: flex; color: #fff; font-family: "Open Sans", sans-serif; }
.tk { flex: none; width: 46px; display: flex; align-items: center; justify-content: center; border-bottom: 2px solid transparent; }
.tk.s { width: 44px; }.tk.s:first-child { width: 39px; margin-right: 3px; }
.run { background: linear-gradient(#85bdb0, #85bdb0) bottom / 38px 3px no-repeat border-box; }
.active { margin-left: 45px; width: 45px; background: linear-gradient(#85bdb0, #85bdb0) bottom / 100% 3px no-repeat border-box, #656660; }
.logo { font-size: 14px; font-weight: 700; fill: #fff; }.badge, .tiny, .ten { font-size: 9px; fill: #fff; }.teams, .word { font-size: 10px; font-weight: 700; fill: #fff; }.ai { font-size: 12px; font-weight: 700; fill: #ff9a00; }.ten { font-weight: 600; }
.tray { flex: 1; display: flex; align-items: center; padding: 0 0 2px 31px; }
.temp { width: 43px; margin-left: 9px; font-size: 12px; }.tray-icons { flex: none; }.lang { margin-left: 7px; font-size: 11px; width: 23px; letter-spacing: -.3px; }.clock { margin-left: 14px; width: 46px; display: flex; flex-direction: column; align-items: center; font-size: 11px; line-height: 16px; letter-spacing: -.1px; white-space: nowrap; }.notice { margin-left: 19px; }
```
